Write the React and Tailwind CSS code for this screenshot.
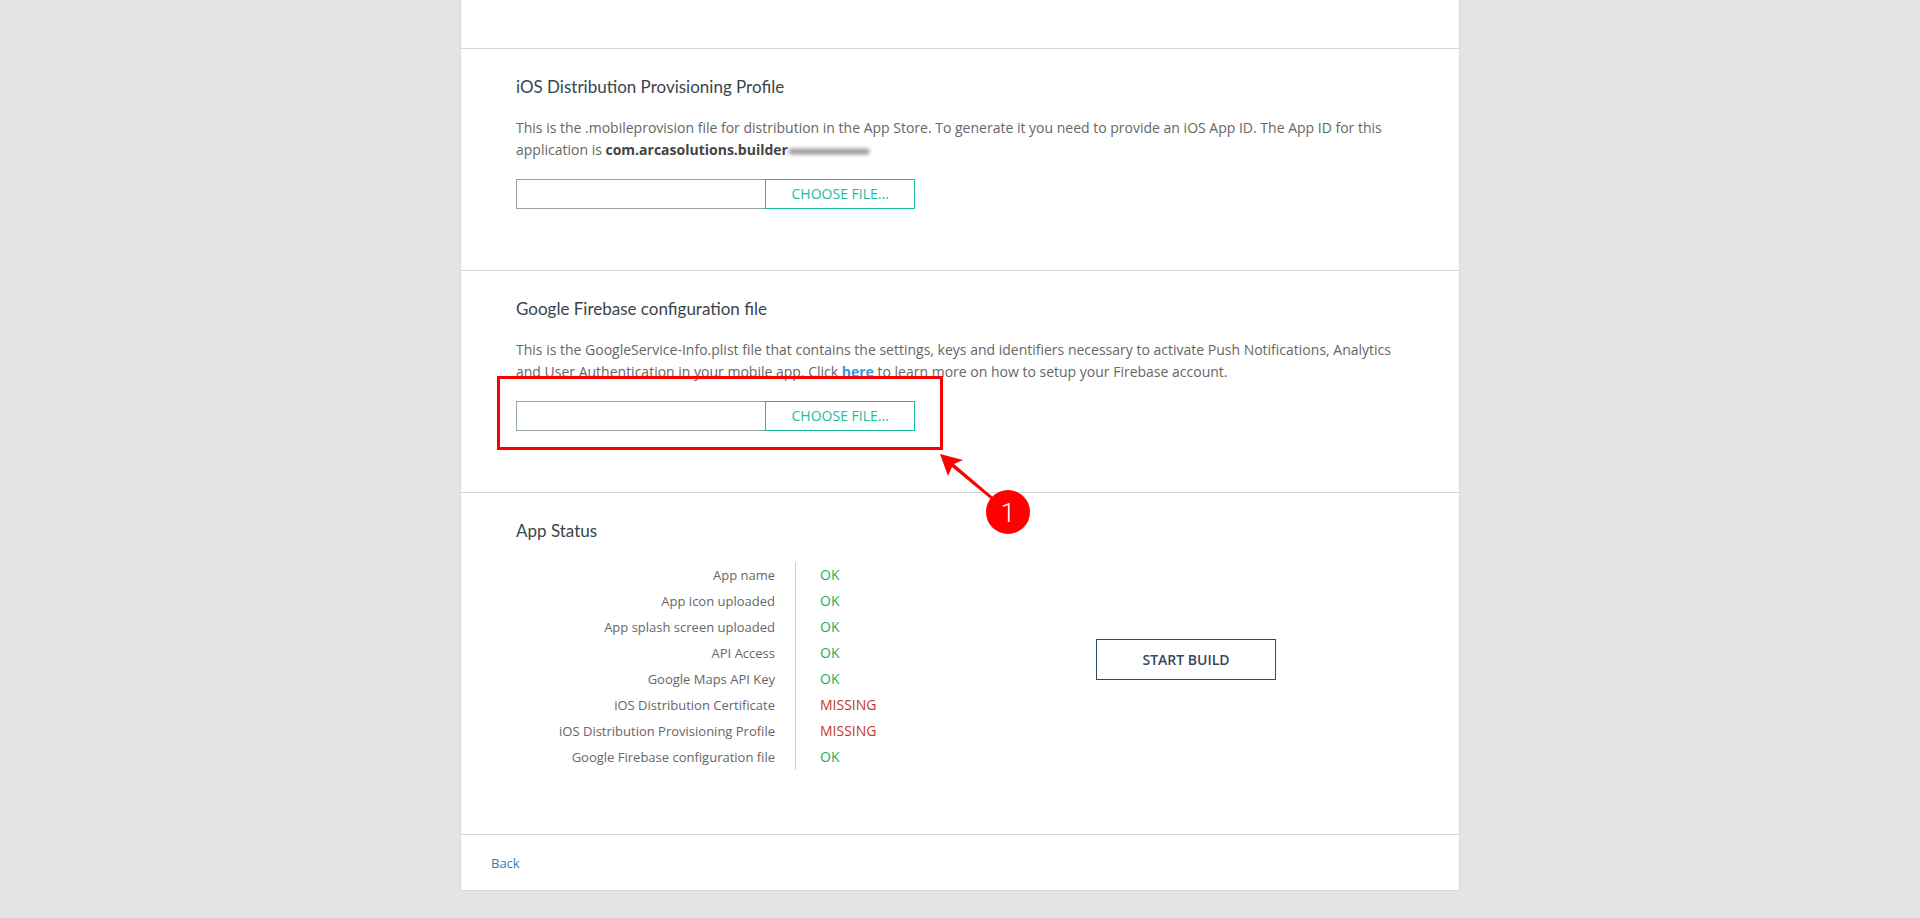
import React from "react";

const statusRows = [
  ["App name", "OK"],
  ["App icon uploaded", "OK"],
  ["App splash screen uploaded", "OK"],
  ["API Access", "OK"],
  ["Google Maps API Key", "OK"],
  ["iOS Distribution Certificate", "MISSING"],
  ["iOS Distribution Provisioning Profile", "MISSING"],
  ["Google Firebase configuration file", "OK"],
];

function Heading({ children }) {
  return <h3 className="font-['Lato',sans-serif] text-[17px] leading-[22px] font-normal text-[#3a444c] m-0">{children}</h3>;
}

function FileInput() {
  return (
    <div className="flex h-[30px] w-[399px]">
      <div className="w-[250px] border border-[#95a5a6] border-r-0 bg-white" />
      <button className="w-[150px] border border-[#1abc9c] bg-white pb-[2px] text-[14px] text-[#1abc9c] uppercase">Choose file...</button>
    </div>
  );
}

export default function App() {
  return (
    <div className="relative h-[918px] overflow-hidden bg-[#e4e4e4] font-['Open_Sans',sans-serif]">
      <div className="mx-auto w-[1000px] bg-white border border-t-0 border-[#d8d8d8] h-[891px] flex flex-col">
        <div className="h-[49px] border-b border-[#d8d8d8]" />

        <section className="h-[222px] border-b border-[#d8d8d8] px-[55px] pt-[27px]">
          <Heading>iOS Distribution Provisioning Profile</Heading>
          <p className="mt-[19px] mb-0 text-[14px] leading-[22px] text-[#666]">
            This is the .mobileprovision file for distribution in the App Store. To generate it you need to provide an iOS App ID. The App ID for this application is <strong className="font-bold text-[#444]">com.arcasolutions.builder</strong>
            <span className="inline-block ml-[1px] w-[80px] h-[5px] align-middle bg-[#888] blur-[2px]" />
          </p>
          <div className="mt-[18px]"><FileInput /></div>
        </section>

        <section className="h-[222px] border-b border-[#d8d8d8] px-[55px] pt-[27px]">
          <Heading>Google Firebase configuration file</Heading>
          <p className="mt-[19px] mb-0 text-[14px] leading-[22px] text-[#666]">
            This is the GoogleService-Info.plist file that contains the settings, keys and identifiers necessary to activate Push Notifications, Analytics and User Authentication in your mobile app. Click <a className="font-bold text-[#3498db]">here</a> to learn more on how to setup your Firebase account.
          </p>
          <div className="mt-[18px]"><FileInput /></div>
        </section>

        <section className="flex-1 border-b border-[#d8d8d8] pl-[55px] pt-[27px]">
          <Heading>App Status</Heading>
          <div className="mt-[20px] flex items-start">
            <div className="w-[400px] shrink-0">
              {statusRows.map(([label, status]) => (
                <div key={label} className="flex h-[26px] items-center">
                  <span className="w-[259px] shrink-0 pt-[1px] text-right text-[13px] text-[#666] whitespace-nowrap">{label}</span>
                  <span className={`ml-[20px] h-[26px] border-l border-[#cfcfcf] pl-[24px] text-[14px] leading-[26px] ${status === "OK" ? "text-[#27ae60]" : "text-[#c0392b]"}`}>{status}</span>
                </div>
              ))}
            </div>
            <button className="ml-[180px] mt-[77px] h-[41px] w-[180px] border border-[#34495e] bg-white text-[14px] font-semibold text-[#34495e] uppercase">Start build</button>
          </div>
        </section>

        <footer className="h-[55px] pl-[30px] pt-[3px] flex items-center">
          <a className="text-[13px] text-[#337ab7]">Back</a>
        </footer>
      </div>

      <div className="absolute left-[497px] top-[376px] w-[446px] h-[74px] border-[3px] border-[#ff0000]" />
      <svg className="absolute left-[930px] top-[440px]" width="120" height="100" viewBox="0 0 120 100" fill="none">
        <path d="M10 14 L33 20 L24 24 L64 58 L62 60 L22 27 L18 36 Z" fill="#ff0000" />
        <circle cx="78" cy="72" r="22" fill="#ff0000" />
      </svg>
      <div className="absolute left-[986px] top-[491px] w-[44px] h-[44px] flex items-center justify-center text-white text-[26px] font-light font-['Roboto',sans-serif]">1</div>
    </div>
  );
}
